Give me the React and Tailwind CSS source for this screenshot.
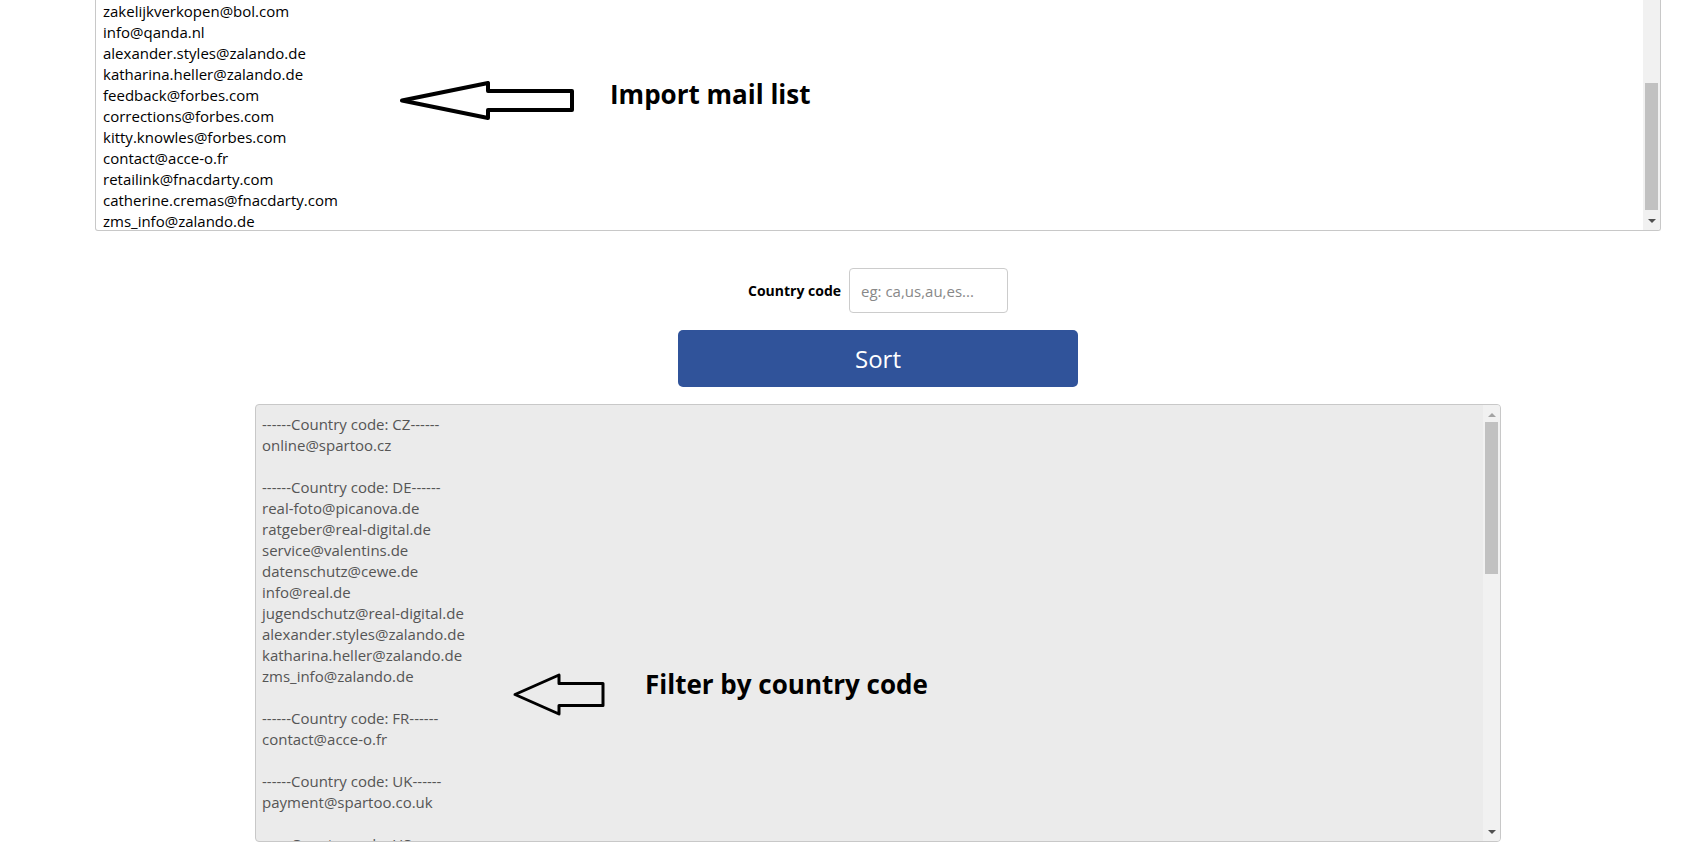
const topList = [
  'zakelijkverkopen@bol.com',
  'info@qanda.nl',
  'alexander.styles@zalando.de',
  'katharina.heller@zalando.de',
  'feedback@forbes.com',
  'corrections@forbes.com',
  'kitty.knowles@forbes.com',
  'contact@acce-o.fr',
  'retailink@fnacdarty.com',
  'catherine.cremas@fnacdarty.com',
  'zms_info@zalando.de',
];

const sorted = [
  '------Country code: CZ------',
  'online@spartoo.cz',
  '',
  '------Country code: DE------',
  'real-foto@picanova.de',
  'ratgeber@real-digital.de',
  'service@valentins.de',
  'datenschutz@cewe.de',
  'info@real.de',
  'jugendschutz@real-digital.de',
  'alexander.styles@zalando.de',
  'katharina.heller@zalando.de',
  'zms_info@zalando.de',
  '',
  '------Country code: FR------',
  'contact@acce-o.fr',
  '',
  '------Country code: UK------',
  'payment@spartoo.co.uk',
  '',
  '------Country code: US------',
];

function Arrow({ w, h, head, shaft, stroke }) {
  const mid = h / 2;
  const pts = [
    [2, mid],
    [head, 2],
    [head, mid - shaft / 2],
    [w - 2, mid - shaft / 2],
    [w - 2, mid + shaft / 2],
    [head, mid + shaft / 2],
    [head, h - 2],
  ]
    .map((p) => p.join(','))
    .join(' ');
  return (
    <svg width={w} height={h} viewBox={`0 0 ${w} ${h}`}>
      <polygon points={pts} fill="none" stroke="#000" strokeWidth={stroke} strokeLinejoin="round" />
    </svg>
  );
}

// fake scrollbar, drawn over the right edge of a box
function Scrollbar({ thumbTop, thumbH, showUp }) {
  return (
    <div className="absolute top-0 right-0 bottom-0 w-[17px] bg-[#f1f1f1]">
      {showUp && (
        <div className="absolute left-[5px] top-[8px] w-0 h-0 border-l-[4px] border-r-[4px] border-b-[4px] border-l-transparent border-r-transparent border-b-[#a3a3a3]" />
      )}
      <div className="absolute left-[2px] w-[13px] bg-[#c1c1c1]" style={{ top: thumbTop, height: thumbH }} />
      <div className="absolute left-[5px] bottom-[7px] w-0 h-0 border-l-[4px] border-r-[4px] border-t-[4px] border-l-transparent border-r-transparent border-t-[#505050]" />
    </div>
  );
}

export default function App() {
  return (
    <div
      className="w-[1699px] h-[858px] bg-white overflow-hidden pl-[95px] pr-[38px]"
      style={{ fontFamily: '"Open Sans", "Noto Sans", sans-serif' }}
    >
      <div className="flex flex-col items-center gap-[17px]">
        {/* imported list */}
        <div className="relative w-full h-[231px] border border-t-0 border-[#c8c8c8] rounded-b-[3px] overflow-hidden bg-white">
          <div className="pt-[1px] pl-[7px] text-[15px] leading-[21px] text-black">
            {topList.map((l, i) => (
              <div key={i}>{l}</div>
            ))}
          </div>
          <Scrollbar thumbTop={83} thumbH={127} />
          <div className="absolute left-[304px] top-[81px]">
            <Arrow w={174} h={39} head={88} shaft={19} stroke={4} />
          </div>
          <div className="absolute left-[514px] top-[74px] text-[26px] font-bold leading-[40px] text-black">
            Import mail list
          </div>
        </div>

        <div className="mt-[20px] flex items-center gap-[8px]">
          <span className="text-[14px] font-bold text-black">Country code</span>
          <input
            className="w-[159px] h-[45px] border border-[#cccccc] rounded-[4px] px-[11px] text-[15px] outline-none placeholder:text-[#888]"
            placeholder="eg: ca,us,au,es..."
          />
        </div>

        <button className="w-[400px] h-[57px] rounded-[5px] bg-[#30539a] text-white text-[24px]">Sort</button>

        {/* sorted output */}
        <div className="relative w-[1246px] h-[438px] border border-[#c8c8c8] rounded-[4px] overflow-hidden bg-[#ebebeb]">
          <div className="pt-[9px] pl-[6px] text-[15px] leading-[21px] text-[#555]">
            {sorted.map((l, i) => (
              <div key={i} className="h-[21px]">
                {l}
              </div>
            ))}
          </div>
          <Scrollbar thumbTop={17} thumbH={152} showUp />
          <div className="absolute left-[257px] top-[268px]">
            <Arrow w={92} h={43} head={46} shaft={22} stroke={3} />
          </div>
          <div className="absolute left-[389px] top-[259px] text-[26px] font-bold leading-[40px] text-black">
            Filter by country code
          </div>
        </div>
      </div>
    </div>
  );
}
